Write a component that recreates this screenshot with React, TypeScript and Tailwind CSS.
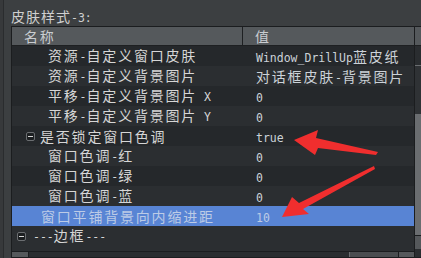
import React from "react";

const CJK = "font-['Noto_Sans_CJK_SC',sans-serif] text-[14px] tracking-[1.8px]";
const ASC = "font-['DejaVu_Sans_Mono',monospace] text-[11.5px]";

function T({ s }: { s: string }) {
  const runs = s.match(/[\u0000-\u00ff]+|[^\u0000-\u00ff]+/g) || [];
  return (
    <>
      {runs.map((r, i) => (
        <span key={i} className={/[^\u0000-\u00ff]/.test(r) ? CJK : ASC + " whitespace-pre"}>
          {r}
        </span>
      ))}
    </>
  );
}

function Minus() {
  return (
    <span className="flex w-[9px] h-[9px] border border-[#6b6e71] rounded-[2px] bg-[#1c1f21] items-center justify-center">
      <span className="block w-[5px] h-[1px] bg-[#d8d8d8]" />
    </span>
  );
}

type Row = { name: string; value: string; pad: number; toggle?: number; sel?: boolean };

const rows: Row[] = [
  { name: "资源-自定义窗口皮肤", value: "Window_DrillUp蓝皮纸", pad: 36 },
  { name: "资源-自定义背景图片", value: "对话框皮肤-背景图片", pad: 36 },
  { name: "平移-自定义背景图片 X", value: "0", pad: 36 },
  { name: "平移-自定义背景图片 Y", value: "0", pad: 36 },
  { name: "是否锁定窗口色调", value: "true", pad: 28, toggle: 14 },
  { name: "窗口色调-红", value: "0", pad: 36 },
  { name: "窗口色调-绿", value: "0", pad: 36 },
  { name: "窗口色调-蓝", value: "0", pad: 36 },
  { name: "窗口平铺背景向内缩进距", value: "10", pad: 29, sel: true },
  { name: "---边框---", value: "", pad: 21, toggle: 5 },
];

export default function App() {
  return (
    <div className="w-[421px] h-[258px] bg-[#37393b] overflow-hidden relative">
      <div className="ml-[3px] h-full border-l border-[#2a2c2e] bg-[#3c3f41] flex flex-col">
        <div className="h-[26px] pl-[7px] pt-[6px] leading-[20px] text-[#cfcfcf] whitespace-nowrap">
          <span className="font-['Noto_Sans_CJK_SC',sans-serif] text-[14px] tracking-[1px]">皮肤样式</span>
          <span className="font-['DejaVu_Sans_Mono',monospace] text-[11.5px]">-3:</span>
        </div>
        <div className="ml-[7px] flex-1 border border-[#1b1d1f] bg-[#26292c] flex min-w-0">
          <div className="w-[402px] flex flex-col shrink-0">
            <div className="h-[19px] flex bg-[#55595c] border-b border-[#1e2022] text-[#c9cdd1] leading-[18px]">
              <div className="w-[231px] pl-[12px] border-r border-[#1e2022]">
                <T s="名称" />
              </div>
              <div className="flex-1 pl-[12px]">
                <T s="值" />
              </div>
            </div>
            <div className="flex-1 flex flex-col">
              {rows.map((r, i) => (
                <div
                  key={i}
                  className={
                    "h-[20px] flex leading-[20px] whitespace-nowrap " +
                    (r.sel
                      ? "bg-[#5884d4] text-[#bccbe6]"
                      : i % 2 === 0
                      ? "bg-[#25282b] text-[#d6d6d6]"
                      : "bg-[#2b2e31] text-[#d6d6d6]")
                  }
                >
                  <div className="w-[232px] overflow-hidden flex items-center relative">
                    {r.toggle !== undefined ? (
                      <div className="absolute top-[6px] flex" style={{ left: r.toggle }}>
                        <Minus />
                      </div>
                    ) : null}
                    <span style={{ paddingLeft: r.pad }}>
                      <T s={r.name} />
                    </span>
                  </div>
                  <div className="flex-1 pl-[12px] overflow-hidden text-[#ccd2d8]">
                    <span className={r.sel ? "text-[#bccbe6]" : ""}>
                      <T s={r.value} />
                    </span>
                  </div>
                </div>
              ))}
              <div className="flex-1 bg-[#2b2e31]" />
            </div>
            <div className="h-[6px] bg-[#3a3d40] border-t border-[#1b1d1f] flex">
              <div className="w-[17px] bg-[#55585b] border-r border-[#1b1d1f]" />
              <div className="w-[321px] bg-[#2a2d30] border-r border-[#6a6d70]" />
              <div className="flex-1 bg-[#4a4d50]" />
              <div className="w-[16px] bg-[#55585b] border-l border-[#1b1d1f]" />
            </div>
          </div>
          <div className="w-[8px] shrink-0 border-l border-[#1b1d1f] flex flex-col">
            <div className="h-[19px] bg-[#55595c] border-b border-[#1e2022]" />
            <div className="h-[19px] bg-[#2a2d30]" />
            <div className="h-[50px] bg-[#2f3235] border-y border-[#6a6d70]" />
            <div className="flex-1 bg-[#6a6d70]" />
            <div className="h-[14px] bg-[#55585b] border-t border-[#1b1d1f]" />
            <div className="h-[8px] bg-[#2a2d30]" />
          </div>
        </div>
      </div>
      <svg className="absolute inset-0 pointer-events-none" width="421" height="258">
        <polygon
          points="294,140 318,130 316,138 378,152 376,155 318,148 315,155"
          fill="#f02e2e"
        />
        <polygon
          points="282,217 292,197 299,203 374,166 375,169 303,209 309,214"
          fill="#f02e2e"
        />
      </svg>
    </div>
  );
}
